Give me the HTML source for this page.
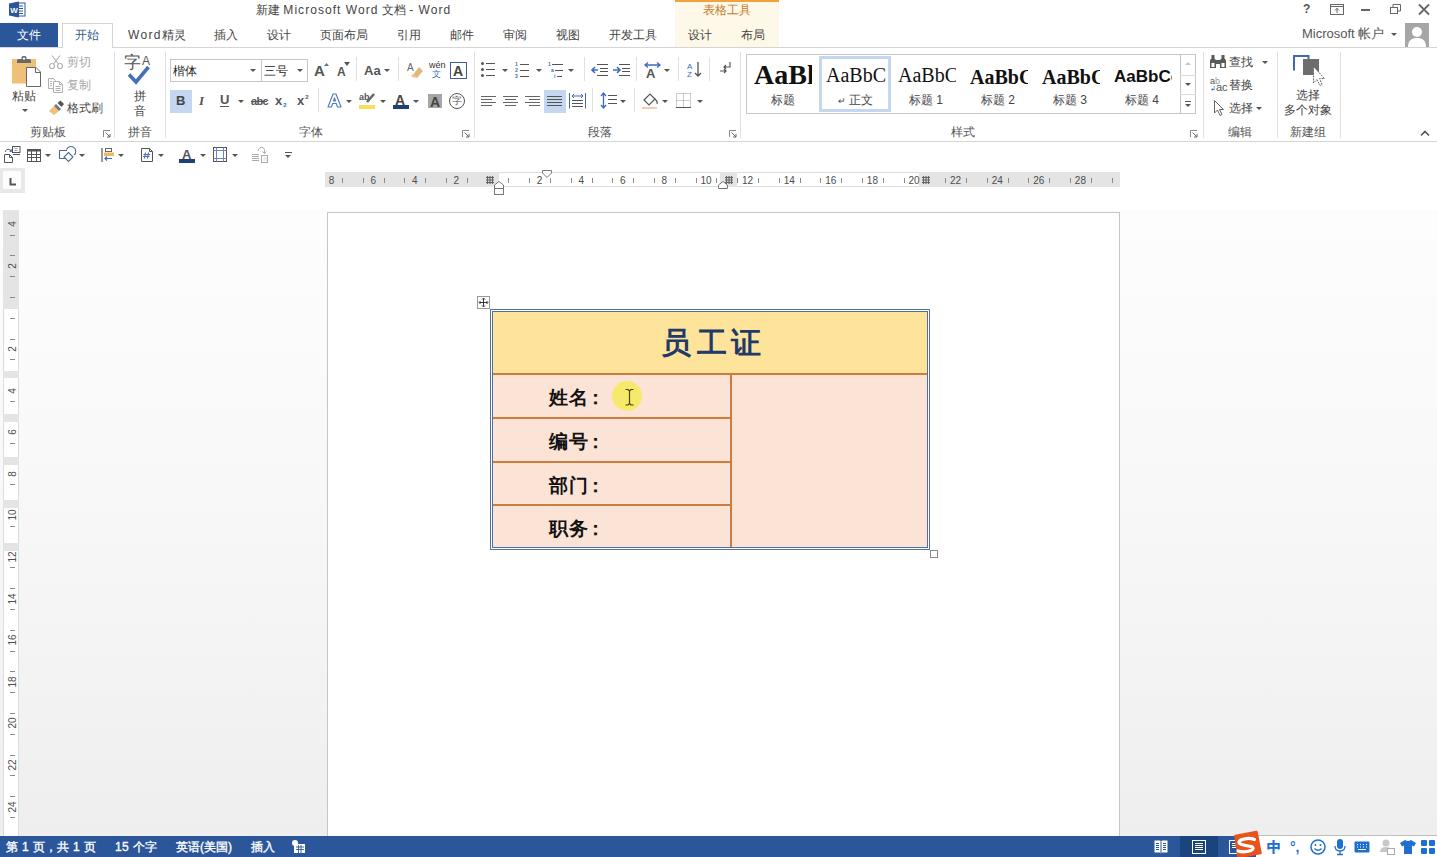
<!DOCTYPE html>
<html><head><meta charset="utf-8">
<style>
*{box-sizing:border-box}
html,body{margin:0;padding:0;width:1437px;height:857px;overflow:hidden;background:#fff;font-family:"Liberation Sans",sans-serif;color:#444;font-size:12px}
.a{position:absolute;white-space:nowrap;line-height:1}
svg{position:absolute;overflow:visible}
.sep{position:absolute;width:1px;background:#e1e1e1}
.gl{position:absolute;white-space:nowrap;line-height:1;color:#555;font-size:12px}
.rn{top:176px;text-align:center;font-size:10px;color:#4d4d4d}
.rt{position:absolute;top:178px;width:1px;height:5px;background:#8a8a8a}
.vn{width:30px;text-align:center;font-size:10px;color:#4d4d4d;transform:rotate(-90deg)}
.vt{position:absolute;left:10px;height:1px;width:5px;background:#8a8a8a}
.ls{letter-spacing:1.05px}
.sb{color:#fff;-webkit-text-stroke:0.35px #fff}
.dd{position:absolute;width:0;height:0;border-left:3px solid transparent;border-right:3px solid transparent;border-top:3px solid #555}
</style></head><body>
<!-- TITLE BAR -->
<div id="title">
 <!-- word icon -->
 <svg style="left:9px;top:1px" width="17" height="17" viewBox="0 0 17 17">
  <rect x="6" y="2" width="10" height="13" fill="#fff" stroke="#2b579a" stroke-width="1"/>
  <path d="M9 5h5M9 7.5h5M9 10h5M9 12.5h5" stroke="#2b579a" stroke-width="1"/>
  <path d="M0 2.5L10 0.5V16.5L0 14.5Z" fill="#2b579a"/>
  <text x="1.2" y="11.5" font-size="8" font-weight="bold" fill="#fff" font-family="Liberation Sans">W</text>
 </svg>
 <div class="a" style="left:256px;top:4px;font-size:12px;color:#444">新建 <span class="ls">Microsoft Word</span> 文档 <span class="ls">- Word</span></div>
 <!-- contextual tab header -->
 <div style="position:absolute;left:675px;top:0;width:104px;height:47px;background:#fef8e8"></div>
 <div style="position:absolute;left:675px;top:0;width:104px;height:2px;background:#f0a23c"></div>
 <div class="a" style="left:703px;top:4px;color:#c6792c">表格工具</div>
 <!-- window buttons -->
 <div class="a" style="left:1303px;top:3px;font-size:12px;font-weight:bold;color:#555">?</div>
 <svg style="left:1330px;top:4px" width="14" height="11"><rect x="0.5" y="0.5" width="13" height="10" fill="none" stroke="#666"/><path d="M0.5 2.5h13" stroke="#666"/><path d="M7 9V4.5M4.8 6.5L7 4.3 9.2 6.5" stroke="#666" fill="none"/></svg>
 <div style="position:absolute;left:1361px;top:9px;width:9px;height:2px;background:#666"></div>
 <svg style="left:1390px;top:4px" width="11" height="11"><rect x="0.5" y="3.5" width="7" height="6" fill="none" stroke="#666"/><path d="M3 3.5V0.5h7.5v6.5H8" fill="none" stroke="#666"/></svg>
 <svg style="left:1418px;top:4px" width="12" height="11"><path d="M1 0.5L11 10.5M11 0.5L1 10.5" stroke="#666" stroke-width="1.8"/></svg>
 <!-- tabs -->
 <div style="position:absolute;left:0;top:23px;width:58px;height:24px;background:#2b579a"></div>
 <div class="a" style="left:17px;top:29px;color:#fff">文件</div>
 <div style="position:absolute;left:0;top:47px;width:1437px;height:1px;background:#d5d5d5"></div>
 <div style="position:absolute;left:62px;top:23px;width:51px;height:25px;background:#fff;border:1px solid #d5d5d5;border-bottom:none"></div>
 <div class="a" style="left:75px;top:29px;color:#34578c">开始</div>
 <div class="a" style="left:128px;top:29px"><span style="letter-spacing:1.3px">Word</span>精灵</div>
 <div class="a" style="left:214px;top:29px">插入</div>
 <div class="a" style="left:267px;top:29px">设计</div>
 <div class="a" style="left:320px;top:29px">页面布局</div>
 <div class="a" style="left:397px;top:29px">引用</div>
 <div class="a" style="left:450px;top:29px">邮件</div>
 <div class="a" style="left:503px;top:29px">审阅</div>
 <div class="a" style="left:556px;top:29px">视图</div>
 <div class="a" style="left:609px;top:29px">开发工具</div>
 <div class="a" style="left:688px;top:29px">设计</div>
 <div class="a" style="left:741px;top:29px">布局</div>
 <div class="a" style="left:1302px;top:27px;font-size:13px;color:#555">Microsoft 帐户</div>
 <div class="dd" style="left:1391px;top:33px"></div>
 <svg style="left:1405px;top:23px" width="24" height="24"><rect width="24" height="24" fill="#a6a6a6"/><circle cx="12" cy="9" r="5" fill="#fff"/><path d="M3 24C3 17 7 15 12 15S21 17 21 24Z" fill="#fff"/></svg>
</div>
<!-- RIBBON -->
<div id="ribbon">
 <div style="position:absolute;left:0;top:141px;width:1437px;height:1px;background:#d5d5d5"></div>
 <!-- clipboard -->
 <svg style="left:12px;top:55px" width="30" height="33" viewBox="0 0 30 33">
  <rect x="0" y="4" width="24" height="24.5" fill="#eec078"/>
  <path d="M5 8V5.5Q5 4 6.5 4H9.5V2.5Q9.5 1 11 1H13Q14.5 1 14.5 2.5V4H17.5Q19 4 19 5.5V8Z" fill="#6a6a6a"/>
  <circle cx="12" cy="3.6" r="1.2" fill="#fff"/>
  <path d="M14.5 12.5H24L28.5 17V31.5H14.5Z" fill="#fff" stroke="#666"/>
  <path d="M23.5 12.5V17.5H28.5" fill="none" stroke="#666"/>
 </svg>
 <div class="a" style="left:12px;top:90px">粘贴</div>
 <div class="dd" style="left:22px;top:109px"></div>
 <svg style="left:49px;top:55px" width="14" height="14"><circle cx="3" cy="11" r="2.5" fill="none" stroke="#b4b4b4" stroke-width="1.2"/><circle cx="11" cy="11" r="2.5" fill="none" stroke="#b4b4b4" stroke-width="1.2"/><path d="M4.5 9L11 0.5M9.5 9L3 0.5" stroke="#b4b4b4" stroke-width="1.2"/></svg>
 <div class="a" style="left:67px;top:56px;color:#a8a8a8">剪切</div>
 <svg style="left:48px;top:78px" width="16" height="15"><path d="M0.5 0.5H5.5L7.5 2.5V4M0.5 0.5V10.5H5" fill="none" stroke="#b0b0b0"/><path d="M2 3.5h2M2 5.5h2M2 7.5h2" stroke="#b0b0b0"/><path d="M5.5 3.5H11.5L14.5 6.5V14.5H5.5Z" fill="#fff" stroke="#b0b0b0"/><path d="M11.5 3.5V6.5H14.5" fill="none" stroke="#b0b0b0"/><path d="M7.5 8.5h5M7.5 10.5h5M7.5 12.5h5" stroke="#b0b0b0"/></svg>
 <div class="a" style="left:67px;top:79px;color:#a8a8a8">复制</div>
 <svg style="left:49px;top:100px" width="16" height="16"><path d="M0 11L5 6L10 11L5 15Z" fill="#eec078"/><path d="M5 6L7 4L12 9L10 11Z" fill="#777"/><path d="M8.5 3L11.5 0.5L15 4L12.5 7Z" fill="#555"/></svg>
 <div class="a" style="left:67px;top:102px;color:#444">格式刷</div>
 <div class="gl" style="left:30px;top:126px">剪贴板</div>
 <svg style="left:103px;top:130px" width="8" height="8"><path d="M0.5 7V0.5H7" fill="none" stroke="#888"/><path d="M2.5 2.5L7 7M7 4v3H4" fill="none" stroke="#666"/></svg>
 <div class="sep" style="left:114px;top:52px;height:86px"></div>
 <!-- pinyin -->
 <div class="a" style="left:124px;top:54px;font-size:17px;color:#555">字</div><div class="a" style="left:142px;top:55px;font-size:12px;color:#555">A</div>
 <svg style="left:127px;top:65px" width="24" height="21"><path d="M2 9.5L9 17L21.5 2" fill="none" stroke="#4470b8" stroke-width="3.6"/></svg>
 <div class="a" style="left:134px;top:90px;color:#444">拼</div>
 <div class="a" style="left:134px;top:105px;color:#444">音</div>
 <div class="gl" style="left:128px;top:126px">拼音</div>
 <div class="sep" style="left:165px;top:52px;height:86px"></div>
 <!-- font group -->
 <div style="position:absolute;left:170px;top:59px;width:92px;height:23px;border:1px solid #c6c6c6;background:#fff"></div>
 <div style="position:absolute;left:261px;top:59px;width:47px;height:23px;border:1px solid #c6c6c6;background:#fff"></div>
 <div class="a" style="left:173px;top:65px;color:#222">楷体</div>
 <div class="dd" style="left:250px;top:69px"></div>
 <div class="a" style="left:264px;top:65px;color:#222">三号</div>
 <div class="dd" style="left:297px;top:69px"></div>
 <div class="a" style="left:314px;top:63px;font-size:15px;font-weight:bold;color:#555">A</div>
 <svg style="left:324px;top:63px" width="5" height="3"><path d="M0 3L2.5 0L5 3Z" fill="#5a6f90"/></svg>
 <div class="a" style="left:337px;top:66px;font-size:12px;font-weight:bold;color:#555">A</div>
 <svg style="left:344px;top:62px" width="6" height="4"><path d="M0 0L3 4L6 0Z" fill="#555"/></svg>
 <div class="sep" style="left:356px;top:57px;height:24px"></div>
 <div class="a" style="left:364px;top:64px;font-size:13px;font-weight:bold;color:#555">Aa</div>
 <div class="dd" style="left:384px;top:69px"></div>
 <div class="sep" style="left:398px;top:57px;height:24px"></div>
 <svg style="left:407px;top:62px" width="16" height="16"><text x="0" y="9" font-size="10" fill="#666" font-family="Liberation Sans">A</text><path d="M6 13L12 5L16 9L10 16Z" fill="#e2b77a"/><path d="M4 14L6 12L9 15L8 16Z" fill="#f0c090"/></svg>
 <div class="a" style="left:429px;top:61px;font-size:9px;color:#333">wén</div>
 <div class="a" style="left:432px;top:70px;font-size:9px;color:#3b6cbf">文</div>
 <svg style="left:450px;top:62px" width="17" height="17"><rect x="0.5" y="0.5" width="16" height="16" fill="none" stroke="#3b5da0"/><text x="3" y="14" font-size="14" font-weight="bold" fill="#444" font-family="Liberation Sans">A</text></svg>
 <!-- row 2 -->
 <div style="position:absolute;left:170px;top:90px;width:22px;height:23px;background:#c5d7f0"></div>
 <div class="a" style="left:176px;top:94px;font-size:13px;font-weight:bold;color:#444">B</div>
 <div class="a" style="left:199px;top:94px;font-size:13px;font-style:italic;font-weight:bold;font-family:'Liberation Serif',serif;color:#555">I</div>
 <div class="a" style="left:220px;top:93px;font-size:13px;font-weight:bold;color:#555">U</div>
 <div style="position:absolute;left:220px;top:106px;width:9px;height:1px;background:#555"></div>
 <div class="dd" style="left:238px;top:100px"></div>
 <div class="a" style="left:251px;top:96px;font-size:11px;font-weight:bold;color:#555;letter-spacing:-0.7px">abc</div>
 <div style="position:absolute;left:251px;top:101px;width:16px;height:1px;background:#555"></div>
 <div class="a" style="left:275px;top:94px;font-size:13px;font-weight:bold;color:#555">x<span style="font-size:6px;color:#3b6cbf;vertical-align:-2px;margin-left:1px">2</span></div>
 <div class="a" style="left:297px;top:94px;font-size:13px;font-weight:bold;color:#555">x<span style="font-size:6px;vertical-align:6px;color:#555;margin-left:1px">2</span></div>
 <div class="sep" style="left:318px;top:88px;height:24px"></div>
 <svg style="left:327px;top:93px" width="15" height="15"><path d="M1 14L6 1H9L14 14H10.5L9.3 10.5H5.7L4.5 14Z M6.5 8H8.5L7.5 5Z" fill="#fff" stroke="#4a78c4" stroke-width="1.1" stroke-linejoin="round"/></svg>
 <div class="dd" style="left:346px;top:100px"></div>
 <div class="a" style="left:359px;top:93px;font-size:9px;font-weight:bold;color:#555">ab</div>
 <svg style="left:362px;top:93px" width="14" height="12"><path d="M12 1L5 9" stroke="#666" stroke-width="2.5"/></svg>
 <div style="position:absolute;left:359px;top:105px;width:16px;height:4px;background:#f7df5b"></div>
 <div class="dd" style="left:380px;top:100px"></div>
 <div class="a" style="left:395px;top:93px;font-size:14px;font-weight:bold;color:#444">A</div>
 <div style="position:absolute;left:393px;top:105px;width:16px;height:4px;background:#1f3f77"></div>
 <div class="dd" style="left:413px;top:100px"></div>
 <div style="position:absolute;left:428px;top:94px;width:14px;height:14px;background:#a6a6a6"></div>
 <div class="a" style="left:430px;top:95px;font-size:14px;font-weight:bold;color:#444">A</div>
 <svg style="left:449px;top:93px" width="17" height="17"><circle cx="8" cy="8" r="7.5" fill="none" stroke="#555"/></svg>
 <div class="a" style="left:452px;top:96px;font-size:10px;color:#555">字</div>
 <div class="gl" style="left:299px;top:126px">字体</div>
 <svg style="left:462px;top:130px" width="8" height="8"><path d="M0.5 7V0.5H7" fill="none" stroke="#888"/><path d="M2.5 2.5L7 7M7 4v3H4" fill="none" stroke="#666"/></svg>
 <div class="sep" style="left:474px;top:52px;height:86px"></div>
 <!-- paragraph group -->
 <svg style="left:481px;top:62px" width="15" height="15"><g fill="#555"><circle cx="1.5" cy="1.5" r="1.5"/><circle cx="1.5" cy="7.5" r="1.5"/><circle cx="1.5" cy="13.5" r="1.5"/></g><path d="M5 1.5h9M5 7.5h9M5 13.5h9" stroke="#555"/></svg>
 <div class="dd" style="left:502px;top:69px"></div>
 <svg style="left:515px;top:62px" width="15" height="16"><g font-size="5" fill="#3b6cbf" font-family="Liberation Sans" font-weight="bold"><text x="0" y="4">1</text><text x="0" y="10">2</text><text x="0" y="16">3</text></g><path d="M5 2.5h9M5 8.5h9M5 14.5h9" stroke="#555"/></svg>
 <div class="dd" style="left:536px;top:69px"></div>
 <svg style="left:548px;top:62px" width="17" height="16"><g font-size="5" fill="#3b6cbf" font-family="Liberation Sans" font-weight="bold"><text x="0" y="4">1</text><text x="3" y="10">a</text><text x="6" y="16">i</text></g><path d="M4 2.5h11M7 8.5h8M9 14.5h5" stroke="#555"/></svg>
 <div class="dd" style="left:568px;top:69px"></div>
 <div class="sep" style="left:584px;top:57px;height:24px"></div>
 <svg style="left:591px;top:64px" width="17" height="12"><path d="M6 0.5h11M9 4.5h8M9 7.5h8M6 11.5h11" stroke="#555"/><path d="M7 6H1M4 3L1 6L4 9" stroke="#3b6cbf" stroke-width="1.6" fill="none"/></svg>
 <svg style="left:613px;top:64px" width="17" height="12"><path d="M6 0.5h11M9 4.5h8M9 7.5h8M6 11.5h11" stroke="#555"/><path d="M0 6H7M4 3L7 6L4 9" stroke="#3b6cbf" stroke-width="1.6" fill="none"/></svg>
 <div class="sep" style="left:636px;top:57px;height:24px"></div>
 <svg style="left:644px;top:62px" width="17" height="16"><path d="M1 3H16M4 0.5L1 3L4 5.5M13 0.5L16 3L13 5.5" stroke="#3b6cbf" stroke-width="1.3" fill="none"/><text x="2" y="15.5" font-size="13" font-weight="bold" fill="#555" font-family="Liberation Sans">A</text></svg>
 <div class="dd" style="left:664px;top:69px"></div>
 <div class="sep" style="left:678px;top:57px;height:24px"></div>
 <svg style="left:687px;top:61px" width="14" height="17"><text x="0" y="8" font-size="8" fill="#3b6cbf" font-family="Liberation Sans">A</text><text x="0" y="16" font-size="8" fill="#3b6cbf" font-family="Liberation Sans">Z</text><path d="M11 1V15M8 12L11 15L14 12" stroke="#555" stroke-width="1.3" fill="none"/></svg>
 <div class="sep" style="left:709px;top:57px;height:24px"></div>
 <svg style="left:720px;top:62px" width="11" height="14"><path d="M10 0V5H4M6 3L4 5L6 7" stroke="#555" stroke-width="1.2" fill="none"/><path d="M0 9H6M4 7L6 9L4 11" stroke="#555" stroke-width="1.2" fill="none"/></svg>
 <!-- row2 -->
 <svg style="left:481px;top:96px" width="15" height="12"><path d="M0 0.5h15M0 3.5h11M0 6.5h15M0 9.5h11" stroke="#666"/></svg>
 <svg style="left:503px;top:96px" width="15" height="12"><path d="M0 0.5h15M2 3.5h11M0 6.5h15M2 9.5h11" stroke="#666"/></svg>
 <svg style="left:525px;top:96px" width="15" height="12"><path d="M0 0.5h15M4 3.5h11M0 6.5h15M4 9.5h11" stroke="#666"/></svg>
 <div style="position:absolute;left:544px;top:90px;width:22px;height:23px;background:#c5d7f0"></div>
 <svg style="left:547px;top:96px" width="15" height="12"><path d="M0 0.5h15M0 3.5h15M0 6.5h15M0 9.5h15" stroke="#555"/></svg>
 <svg style="left:569px;top:93px" width="17" height="16"><path d="M0.5 0V15.5M16.5 0V15.5" stroke="#3b6cbf"/><path d="M3 3H14M5 1L3 3L5 5M12 1L14 3L12 5" stroke="#3b6cbf" fill="none"/><path d="M3 7.5h11M3 10.5h11M3 13.5h11" stroke="#555"/></svg>
 <div class="sep" style="left:592px;top:88px;height:24px"></div>
 <svg style="left:600px;top:92px" width="17" height="17"><path d="M3.5 1V16M1 4L3.5 1L6 4M1 13L3.5 16L6 13" stroke="#3b6cbf" stroke-width="1.3" fill="none"/><path d="M8 3.5h9M8 7.5h9M8 11.5h9" stroke="#555"/></svg>
 <div class="dd" style="left:620px;top:100px"></div>
 <div class="sep" style="left:634px;top:88px;height:24px"></div>
 <svg style="left:642px;top:92px" width="17" height="17"><path d="M2 8L8 2L13 7L7 13Z" fill="#fff" stroke="#555" stroke-width="1.2"/><path d="M13 7Q16 10 15 12" stroke="#555" fill="none" stroke-width="1.2"/><rect x="0" y="15" width="15" height="2" fill="#f6c9b9"/></svg>
 <div class="dd" style="left:662px;top:100px"></div>
 <svg style="left:676px;top:93px" width="15" height="15"><path d="M0.5 0.5h14v14h-14zM7.5 0.5v14M0.5 7.5h14" fill="none" stroke="#999" stroke-dasharray="1 1"/><path d="M0 14.5h15" stroke="#555"/></svg>
 <div class="dd" style="left:697px;top:100px"></div>
 <div class="gl" style="left:588px;top:126px">段落</div>
 <svg style="left:729px;top:130px" width="8" height="8"><path d="M0.5 7V0.5H7" fill="none" stroke="#888"/><path d="M2.5 2.5L7 7M7 4v3H4" fill="none" stroke="#666"/></svg>
 <div class="sep" style="left:740px;top:52px;height:86px"></div>
 <!-- styles gallery -->
 <div style="position:absolute;left:746px;top:54px;width:450px;height:60px;border:1px solid #c6c6c6;background:#fff"></div>
 <div class="a" style="left:754px;top:61px;font-family:'Liberation Serif',serif;font-weight:bold;font-size:28px;color:#111;width:58px;overflow:hidden">AaBl</div>
 <div class="a" style="left:771px;top:94px">标题</div>
 <div style="position:absolute;left:819px;top:56px;width:72px;height:56px;border:3px solid #c5d7f0"></div>
 <div class="a" style="left:826px;top:65px;font-family:'Liberation Serif',serif;font-size:20px;color:#111;width:60px;overflow:hidden">AaBbC</div>
 <div class="a" style="left:838px;top:94px"><span style="font-size:9px">↵</span> 正文</div>
 <div class="a" style="left:898px;top:65px;font-family:'Liberation Serif',serif;font-size:20px;color:#111;width:58px;overflow:hidden">AaBbC</div>
 <div class="a" style="left:909px;top:94px">标题 1</div>
 <div class="a" style="left:970px;top:67px;font-family:'Liberation Serif',serif;font-weight:bold;font-size:20px;color:#111;width:58px;overflow:hidden">AaBbC</div>
 <div class="a" style="left:981px;top:94px">标题 2</div>
 <div class="a" style="left:1042px;top:67px;font-family:'Liberation Serif',serif;font-weight:bold;font-size:20px;color:#111;width:58px;overflow:hidden">AaBbC</div>
 <div class="a" style="left:1053px;top:94px">标题 3</div>
 <div class="a" style="left:1114px;top:68px;font-weight:bold;font-size:17px;color:#111;width:58px;overflow:hidden">AaBbCc</div>
 <div class="a" style="left:1125px;top:94px">标题 4</div>
 <div style="position:absolute;left:1180px;top:54px;width:16px;height:60px;border:1px solid #c6c6c6;background:#fff"></div>
 <div style="position:absolute;left:1180px;top:75px;width:16px;height:1px;background:#dadada"></div>
 <div style="position:absolute;left:1180px;top:94px;width:16px;height:1px;background:#dadada"></div>
 <svg style="left:1185px;top:62px" width="6" height="3"><path d="M0 3L3 0L6 3Z" fill="#c6c6c6"/></svg>
 <div class="dd" style="left:1185px;top:83px"></div>
 <div style="position:absolute;left:1185px;top:101px;width:6px;height:1px;background:#555"></div>
 <div class="dd" style="left:1185px;top:104px"></div>
 <div class="gl" style="left:951px;top:126px">样式</div>
 <svg style="left:1190px;top:130px" width="8" height="8"><path d="M0.5 7V0.5H7" fill="none" stroke="#888"/><path d="M2.5 2.5L7 7M7 4v3H4" fill="none" stroke="#666"/></svg>
 <div class="sep" style="left:1203px;top:52px;height:86px"></div>
 <!-- editing -->
 <svg style="left:1210px;top:55px" width="16" height="13"><g fill="#5a5a5a"><path d="M1.5 0H4.5V3.5L6 5V13H0V5L1.5 3.5Z"/><path d="M11.5 0H14.5V3.5L16 5V13H10V5L11.5 3.5Z"/><rect x="6" y="5" width="4" height="4"/></g><rect x="1.5" y="8" width="3" height="4" fill="#fff"/><rect x="11.5" y="8" width="3" height="4" fill="#fff"/></svg>
 <div class="a" style="left:1229px;top:56px">查找</div>
 <div class="dd" style="left:1262px;top:61px"></div>
 <div class="a" style="left:1210px;top:78px;font-size:9px;color:#555;line-height:6px">a<span style="color:#999">b</span><br><span style="color:#3b6cbf;font-size:7px">↲</span><span style="font-size:11px">ac</span></div>
 <div class="a" style="left:1229px;top:79px">替换</div>
 <svg style="left:1214px;top:100px" width="10" height="16"><path d="M0.5 0.5V13L3.5 10L6 15.5L8 14.5L5.5 9.5H9.5Z" fill="#fff" stroke="#666"/></svg>
 <div class="a" style="left:1229px;top:102px">选择</div>
 <div class="dd" style="left:1256px;top:107px"></div>
 <div class="gl" style="left:1228px;top:126px">编辑</div>
 <div class="sep" style="left:1277px;top:52px;height:86px"></div>
 <!-- new group -->
 <svg style="left:1293px;top:55px" width="33" height="31"><path d="M1 15.5V1H15.5V4" fill="none" stroke="#3e6bb0" stroke-width="2"/><rect x="10" y="4" width="16" height="16" fill="#6d6d6d"/><path d="M20.5 11.5V28L24 24.5L27 30.5L29 29.5L26.5 23.5H31.5Z" fill="#fff" stroke="#666" stroke-dasharray="2 1"/></svg>
 <div class="a" style="left:1296px;top:89px">选择</div>
 <div class="a" style="left:1284px;top:104px">多个对象</div>
 <div class="gl" style="left:1290px;top:126px">新建组</div>
 <div class="sep" style="left:1340px;top:52px;height:86px"></div>
 <svg style="left:1420px;top:130px" width="10" height="6"><path d="M1 5.5L5 1.5L9 5.5" fill="none" stroke="#555" stroke-width="1.6"/></svg>
</div>
<!-- QAT + RULER -->
<div id="qat">
 <svg style="left:4px;top:146px" width="17" height="17"><path d="M0.5 8.5H5.5L8.5 11.5V16.5H0.5Z" fill="#fff" stroke="#555"/><path d="M5.5 8.5V11.5H8.5" fill="none" stroke="#555"/><rect x="8.5" y="0.5" width="7.5" height="6" fill="#fff" stroke="#555"/><path d="M10.5 2.5h3M10.5 4.5h3" stroke="#8aa0c0"/><path d="M9 8.5h7" stroke="#555"/><path d="M1.5 6Q2 2.5 5.5 3.5L7 5" fill="none" stroke="#555"/><path d="M5.5 5.5L7.5 5.5L7 3" fill="none" stroke="#3b6cbf"/></svg>
 <svg style="left:27px;top:149px" width="14" height="13"><rect x="0.5" y="0.5" width="13" height="12" fill="#fff" stroke="#555"/><rect x="0" y="0" width="14" height="2.5" fill="#555"/><path d="M0.5 5.5h13M0.5 8.5h13M4.5 2v11M9.5 2v11" stroke="#555"/></svg>
 <div class="dd" style="left:45px;top:154px"></div>
 <svg style="left:59px;top:146px" width="17" height="17"><path d="M6 12.5H0.5V4.5H8" fill="none" stroke="#4d6c9c" stroke-width="1.1"/><path d="M7.5 3.5A4.8 4.8 0 1 1 15 9" fill="none" stroke="#4d6c9c" stroke-width="1.1"/><path d="M9.5 6.5L14 11L9.5 15.5L5 11Z" fill="#fff" stroke="#4d6c9c" stroke-width="1.1"/></svg>
 <div class="dd" style="left:79px;top:154px"></div>
 <svg style="left:101px;top:147px" width="13" height="16"><path d="M1 1V15" stroke="#555" stroke-width="1.2"/><rect x="4.5" y="1.5" width="6" height="3" fill="#fff" stroke="#666"/><rect x="3" y="5.5" width="10" height="3.5" fill="#efb969"/><path d="M11 11.5H4M6 9.5L4 11.5L6 13.5" fill="none" stroke="#3b6cbf" stroke-width="1.2"/></svg>
 <div class="dd" style="left:118px;top:154px"></div>
 <svg style="left:141px;top:148px" width="12" height="14"><path d="M0.5 0.5H8.5L11.5 3.5V13.5H0.5Z" fill="#fff" stroke="#555"/><path d="M8.5 0.5V3.5H11.5" fill="none" stroke="#555"/><path d="M4.5 4.5L3.5 10.5M7.5 4.5L6.5 10.5M2.5 6.5H9M2 8.5H8.5" stroke="#4a6cb0" stroke-width="1.1"/></svg>
 <div class="dd" style="left:158px;top:154px"></div>
 <div class="a" style="left:182px;top:148px;font-size:13px;font-weight:bold;color:#555">A</div>
 <div style="position:absolute;left:179px;top:159px;width:16px;height:4px;background:#1f3f77"></div>
 <div class="dd" style="left:200px;top:154px"></div>
 <svg style="left:213px;top:147px" width="14" height="15"><rect x="0.5" y="0.5" width="13" height="14" fill="#fff" stroke="#555"/><path d="M3.5 0.5v14M10.5 0.5v14M0.5 3.5h13M0.5 11.5h13" stroke="#6a86c0"/></svg>
 <div class="dd" style="left:232px;top:154px"></div>
 <svg style="left:251px;top:146px" width="17" height="17"><path d="M1 8.5h7M1 10.5h7M1 12.5h7M1 14.5h7" stroke="#aaa"/><rect x="10.5" y="9.5" width="6" height="7" fill="#fff" stroke="#aaa"/><path d="M12.5 12h1M14.5 12h1M12.5 14h1M14.5 14h1" stroke="#bbb"/><path d="M7 5Q8 0.5 12 1.5Q14 2.5 13.5 7M11.5 5.5L13.5 7.5L15.5 5.5" fill="none" stroke="#aaa"/></svg>
 <div style="position:absolute;left:285px;top:152px;width:7px;height:1px;background:#555"></div>
 <div class="dd" style="left:285px;top:155px"></div>
 <!-- tab selector -->
 <div style="position:absolute;left:0;top:168px;width:25px;height:25px;background:#e8e8e8"></div>
 <div style="position:absolute;left:3px;top:171px;width:18px;height:18px;background:#fdfdfd"></div>
 <svg style="left:9px;top:178px" width="8" height="8"><path d="M1.5 0V6.5H7" fill="none" stroke="#555" stroke-width="2"/></svg>
</div>
<!-- doc background -->
<div style="position:absolute;left:0;top:210px;width:1437px;height:626px;background:linear-gradient(#fdfdfd 0%,#f8f8f8 45%,#f2f2f2 80%,#eeeeee 100%)"></div>
<div id="ruler">
 <div style="position:absolute;left:325px;top:172px;width:795px;height:15px;background:#e4e4e4"></div>
 <div style="position:absolute;left:499px;top:172px;width:221px;height:15px;background:#fff;border-top:1px solid #dcdcdc;border-bottom:1px solid #dcdcdc"></div>
 <div style="position:absolute;left:737px;top:172px;width:182px;height:15px;background:#fff;border-top:1px solid #dcdcdc;border-bottom:1px solid #dcdcdc"></div>
 <div class="a rn" style="left:316.6px;width:30px">8</div>
 <div class="a rn" style="left:358.2px;width:30px">6</div>
 <div class="a rn" style="left:399.8px;width:30px">4</div>
 <div class="a rn" style="left:441.4px;width:30px">2</div>
 <div class="a rn" style="left:524.6px;width:30px">2</div>
 <div class="a rn" style="left:566.2px;width:30px">4</div>
 <div class="a rn" style="left:607.8px;width:30px">6</div>
 <div class="a rn" style="left:649.4px;width:30px">8</div>
 <div class="a rn" style="left:691.0px;width:30px">10</div>
 <div class="a rn" style="left:732.6px;width:30px">12</div>
 <div class="a rn" style="left:774.2px;width:30px">14</div>
 <div class="a rn" style="left:815.8px;width:30px">16</div>
 <div class="a rn" style="left:857.4px;width:30px">18</div>
 <div class="a rn" style="left:899.0px;width:30px">20</div>
 <div class="a rn" style="left:940.6px;width:30px">22</div>
 <div class="a rn" style="left:982.2px;width:30px">24</div>
 <div class="a rn" style="left:1023.8px;width:30px">26</div>
 <div class="a rn" style="left:1065.4px;width:30px">28</div>
 <div class="rt" style="left:342px"></div>
 <div class="rt" style="left:363px"></div>
 <div class="rt" style="left:384px"></div>
 <div class="rt" style="left:404px"></div>
 <div class="rt" style="left:425px"></div>
 <div class="rt" style="left:446px"></div>
 <div class="rt" style="left:467px"></div>
 <div class="rt" style="left:508px"></div>
 <div class="rt" style="left:529px"></div>
 <div class="rt" style="left:550px"></div>
 <div class="rt" style="left:571px"></div>
 <div class="rt" style="left:592px"></div>
 <div class="rt" style="left:612px"></div>
 <div class="rt" style="left:633px"></div>
 <div class="rt" style="left:654px"></div>
 <div class="rt" style="left:675px"></div>
 <div class="rt" style="left:696px"></div>
 <div class="rt" style="left:716px"></div>
 <div class="rt" style="left:737px"></div>
 <div class="rt" style="left:758px"></div>
 <div class="rt" style="left:779px"></div>
 <div class="rt" style="left:800px"></div>
 <div class="rt" style="left:820px"></div>
 <div class="rt" style="left:841px"></div>
 <div class="rt" style="left:862px"></div>
 <div class="rt" style="left:883px"></div>
 <div class="rt" style="left:904px"></div>
 <div class="rt" style="left:945px"></div>
 <div class="rt" style="left:966px"></div>
 <div class="rt" style="left:987px"></div>
 <div class="rt" style="left:1008px"></div>
 <div class="rt" style="left:1028px"></div>
 <div class="rt" style="left:1049px"></div>
 <div class="rt" style="left:1070px"></div>
 <div class="rt" style="left:1091px"></div>
 <div class="rt" style="left:1112px"></div>
 <svg style="left:486px;top:176px" width="8" height="8"><path d="M1.5 0v8M4 0v8M6.5 0v8M0 1.5h8M0 4h8M0 6.5h8" stroke="#666" stroke-width="1.2"/></svg>
 <svg style="left:725px;top:176px" width="8" height="8"><path d="M1.5 0v8M4 0v8M6.5 0v8M0 1.5h8M0 4h8M0 6.5h8" stroke="#666" stroke-width="1.2"/></svg>
 <svg style="left:922px;top:176px" width="8" height="8"><path d="M1.5 0v8M4 0v8M6.5 0v8M0 1.5h8M0 4h8M0 6.5h8" stroke="#666" stroke-width="1.2"/></svg>
 <svg style="left:542px;top:170px" width="10" height="8"><path d="M0.5 0.5H9.5V3L5 7.5L0.5 3Z" fill="#fff" stroke="#777"/></svg>
 <svg style="left:494px;top:181px" width="10" height="14"><path d="M0.5 7.5V4L5 0.5L9.5 4V7.5Z" fill="#fff" stroke="#777"/><rect x="0.5" y="7.5" width="9" height="6" fill="#fff" stroke="#777"/></svg>
 <svg style="left:718px;top:181px" width="10" height="8"><path d="M0.5 7.5V4L5 0.5L9.5 4V7.5Z" fill="#fff" stroke="#777"/></svg>
 <div style="position:absolute;left:3px;top:210px;width:16px;height:626px;background:#fff;border-left:1px solid #dcdcdc;border-right:1px solid #dcdcdc"></div>
 <div style="position:absolute;left:3px;top:210px;width:16px;height:99px;background:#e4e4e4"></div>
 <div style="position:absolute;left:3px;top:371px;width:16px;height:7px;background:#e4e4e4"></div>
 <div style="position:absolute;left:3px;top:414px;width:16px;height:8px;background:#e4e4e4"></div>
 <div style="position:absolute;left:3px;top:457px;width:16px;height:8px;background:#e4e4e4"></div>
 <div style="position:absolute;left:3px;top:500px;width:16px;height:8px;background:#e4e4e4"></div>
 <div style="position:absolute;left:3px;top:543px;width:16px;height:8px;background:#e4e4e4"></div>
 <div class="a vn" style="left:-2px;top:219.2px">4</div>
 <div class="a vn" style="left:-2px;top:260.8px">2</div>
 <div class="a vn" style="left:-2px;top:344.0px">2</div>
 <div class="a vn" style="left:-2px;top:385.6px">4</div>
 <div class="a vn" style="left:-2px;top:427.2px">6</div>
 <div class="a vn" style="left:-2px;top:468.8px">8</div>
 <div class="a vn" style="left:-2px;top:510.4px">10</div>
 <div class="a vn" style="left:-2px;top:552.0px">12</div>
 <div class="a vn" style="left:-2px;top:593.6px">14</div>
 <div class="a vn" style="left:-2px;top:635.2px">16</div>
 <div class="a vn" style="left:-2px;top:676.8px">18</div>
 <div class="a vn" style="left:-2px;top:718.4px">20</div>
 <div class="a vn" style="left:-2px;top:760.0px">22</div>
 <div class="a vn" style="left:-2px;top:801.6px">24</div>
 <div class="vt" style="top:235px"></div>
 <div class="vt" style="top:255px"></div>
 <div class="vt" style="top:276px"></div>
 <div class="vt" style="top:297px"></div>
 <div class="vt" style="top:318px"></div>
 <div class="vt" style="top:339px"></div>
 <div class="vt" style="top:359px"></div>
 <div class="vt" style="top:401px"></div>
 <div class="vt" style="top:443px"></div>
 <div class="vt" style="top:484px"></div>
 <div class="vt" style="top:526px"></div>
 <div class="vt" style="top:567px"></div>
 <div class="vt" style="top:588px"></div>
 <div class="vt" style="top:609px"></div>
 <div class="vt" style="top:630px"></div>
 <div class="vt" style="top:651px"></div>
 <div class="vt" style="top:671px"></div>
 <div class="vt" style="top:692px"></div>
 <div class="vt" style="top:713px"></div>
 <div class="vt" style="top:734px"></div>
 <div class="vt" style="top:755px"></div>
 <div class="vt" style="top:775px"></div>
 <div class="vt" style="top:796px"></div>
 <div class="vt" style="top:817px"></div>
</div>
<!-- DOC -->
<div id="doc">
 <div style="position:absolute;left:327px;top:212px;width:793px;height:640px;background:#fff;border:1px solid #c6c6c6"></div>
 <!-- table move handle -->
 <svg style="left:477px;top:296px" width="13" height="13"><rect x="0.5" y="0.5" width="12" height="12" fill="#fff" stroke="#9a9a9a"/><path d="M6.5 2.5v8M2.5 6.5h8" stroke="#333"/><path d="M5 3.5L6.5 2L8 3.5M5 9.5L6.5 11L8 9.5M3.5 5L2 6.5L3.5 8M9.5 5L11 6.5L9.5 8" fill="none" stroke="#333"/></svg>
 <!-- selection outline -->
 <div style="position:absolute;left:490px;top:309px;width:440px;height:241px;border:1px solid #50709f"></div>
 <div style="position:absolute;left:492px;top:311px;width:436px;height:237px;border:1px solid #50709f"></div>
 <!-- table fills -->
 <div style="position:absolute;left:493px;top:312px;width:434px;height:61px;background:#fde49a"></div>
 <div style="position:absolute;left:493px;top:375px;width:434px;height:172px;background:#fbe3d5"></div>
 <div style="position:absolute;left:493px;top:373px;width:434px;height:2px;background:#cc7c3e"></div>
 <div style="position:absolute;left:730px;top:375px;width:2px;height:172px;background:#cc7c3e"></div>
 <div style="position:absolute;left:493px;top:417px;width:237px;height:2px;background:#cc7c3e"></div>
 <div style="position:absolute;left:493px;top:461px;width:237px;height:2px;background:#cc7c3e"></div>
 <div style="position:absolute;left:493px;top:504px;width:237px;height:2px;background:#cc7c3e"></div>
 <!-- text -->
 <div class="a" style="left:661.0px;top:328px;font-size:30px;font-weight:bold;color:#22396a">员</div><div class="a" style="left:696.5px;top:328px;font-size:30px;font-weight:bold;color:#22396a">工</div><div class="a" style="left:730.5px;top:328px;font-size:30px;font-weight:bold;color:#22396a">证</div>
 <div class="a" style="left:549px;top:388px;font-size:19px;font-weight:bold;color:#111;letter-spacing:1px">姓名<span style="margin-left:-3.5px">：</span></div>
 <div class="a" style="left:549px;top:432px;font-size:19px;font-weight:bold;color:#111;letter-spacing:1px">编号<span style="margin-left:-3.5px">：</span></div>
 <div class="a" style="left:549px;top:476px;font-size:19px;font-weight:bold;color:#111;letter-spacing:1px">部门<span style="margin-left:-3.5px">：</span></div>
 <div class="a" style="left:549px;top:519px;font-size:19px;font-weight:bold;color:#111;letter-spacing:1px">职务<span style="margin-left:-3.5px">：</span></div>
 <!-- cursor highlight -->
 <div style="position:absolute;left:612px;top:381px;width:30px;height:30px;border-radius:50%;background:#f7e96c"></div>
 <svg style="left:625px;top:389px" width="9" height="17"><path d="M0.5 0.5h2.5l1.5 1.5 1.5-1.5h2.5M4.5 2v13M0.5 16h2.5l1.5-1.5 1.5 1.5h2.5" fill="none" stroke="#4a4400" stroke-width="1.2"/></svg>
 <!-- resize handle -->
 <div style="position:absolute;left:930px;top:550px;width:8px;height:8px;border:1px solid #8a8a8a;background:#fff"></div>
</div>
<!-- STATUS -->
<div id="status">
 <div style="position:absolute;left:0;top:836px;width:1437px;height:21px;background:#2b579a"></div>
 <div class="a sb" style="left:6px;top:841px;letter-spacing:0.3px">第 1 页，共 1 页</div>
 <div class="a sb" style="left:115px;top:841px;letter-spacing:0.4px">15 个字</div>
 <div class="a sb" style="left:176px;top:841px">英语(美国)</div>
 <div class="a sb" style="left:251px;top:841px">插入</div>
 <svg style="left:292px;top:840px" width="13" height="13"><circle cx="3" cy="3" r="3" fill="#fff"/><rect x="2" y="4" width="11" height="9" fill="#fff"/><path d="M4 7h8M4 9.5h8M6.5 5v8M9 5v8" stroke="#2b579a" stroke-width="0.9"/></svg>
 <!-- view buttons -->
 <svg style="left:1154px;top:840px" width="14" height="14"><path d="M0.5 0.5H6L7 1.5L8 0.5H13.5V12.5H8L7 13.5L6 12.5H0.5Z" fill="#fff"/><path d="M7 1.5V13M2 3.5h3M2 5.5h3M2 7.5h3M2 9.5h3M9 3.5h3M9 5.5h3M9 7.5h3M9 9.5h3" stroke="#2b579a"/></svg>
 <div style="position:absolute;left:1180px;top:836px;width:38px;height:21px;background:#19447e"></div>
 <svg style="left:1192px;top:840px" width="14" height="14"><rect x="0.5" y="0.5" width="13" height="13" fill="none" stroke="#fff"/><path d="M3 3.5h8M3 5.5h8M3 7.5h8M3 9.5h8" stroke="#fff"/></svg>
 <svg style="left:1229px;top:840px" width="14" height="14"><rect x="0.5" y="0.5" width="13" height="13" fill="none" stroke="#fff"/><path d="M3 3.5h8M3 5.5h8M3 7.5h8" stroke="#fff"/></svg>
 <!-- sogou bar -->
 <div style="position:absolute;left:1256px;top:835px;width:181px;height:22px;background:#fff;border-top:1px solid #bfbfbf"></div>
 <svg style="left:1232px;top:831px" width="30" height="26"><path d="M3.5 5L24.5 1L28.5 22L6.5 26Z" fill="#e9521b" stroke="#e9521b" stroke-width="2.5" stroke-linejoin="round"/><path d="M22.5 8.5Q16 6 9 9Q4.5 11.5 9.5 13.5Q15 15 19.5 15.5Q23 17 19 19.5Q12 22 6 20" fill="none" stroke="#fff" stroke-width="3.2" stroke-linecap="round"/></svg>
 <div class="a" style="left:1267px;top:840px;font-size:14px;color:#1e6fd0;-webkit-text-stroke:0.9px #1e6fd0">中</div>
 <div class="a" style="left:1290px;top:840px;font-size:14px;font-weight:bold;color:#1e6fd0">°,</div>
 <svg style="left:1310px;top:839px" width="16" height="16"><circle cx="8" cy="8" r="7" fill="none" stroke="#1e6fd0" stroke-width="1.5"/><circle cx="5.5" cy="6" r="1" fill="#1e6fd0"/><circle cx="10.5" cy="6" r="1" fill="#1e6fd0"/><path d="M4.5 9.5Q8 13 11.5 9.5" fill="none" stroke="#1e6fd0" stroke-width="1.3"/></svg>
 <svg style="left:1334px;top:839px" width="12" height="17"><rect x="3" y="0" width="6" height="10" rx="3" fill="#1e6fd0"/><path d="M1 7Q1 12 6 12Q11 12 11 7M6 12V15M3 15.5h6" fill="none" stroke="#1e6fd0" stroke-width="1.3"/></svg>
 <svg style="left:1354px;top:841px" width="16" height="12"><rect x="0.5" y="0.5" width="15" height="11" rx="1" fill="#1e6fd0"/><path d="M3 3.5h1M6 3.5h1M9 3.5h1M12 3.5h1M3 6h1M6 6h1M9 6h1M12 6h1M4 8.5h8" stroke="#fff"/></svg>
 <svg style="left:1380px;top:839px" width="15" height="16"><circle cx="6" cy="4" r="3.5" fill="#c8c8c8"/><path d="M0 13Q0 8 6 8Q10 8 11 10V13Z" fill="#c8c8c8"/><rect x="7.5" y="9.5" width="7" height="6" fill="#fff" stroke="#aaa"/></svg>
 <svg style="left:1400px;top:840px" width="16" height="14"><path d="M5 0L0 3L2 6.5L4 5.5V14H12V5.5L14 6.5L16 3L11 0Q8 2 5 0Z" fill="#1e6fd0"/></svg>
 <svg style="left:1421px;top:840px" width="14" height="14"><rect x="0" y="0" width="6" height="6" rx="1" fill="#1e6fd0"/><rect x="8" y="0" width="6" height="6" rx="1" fill="#1e6fd0"/><rect x="0" y="8" width="6" height="6" rx="1" fill="#1e6fd0"/><rect x="8" y="8" width="6" height="6" rx="1" fill="#1e6fd0"/></svg>
</div>
</body></html>
